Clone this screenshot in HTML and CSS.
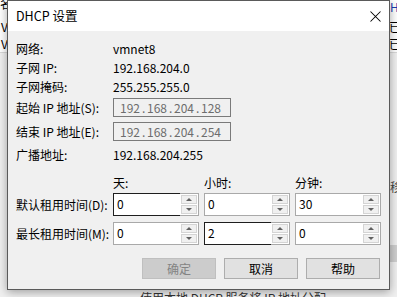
FILE: index.html
```html
<!DOCTYPE html>
<html lang="zh-CN">
<head>
<meta charset="utf-8">
<link rel="stylesheet" href="styles.css">
</head>
<body>
<div class="desktop">
  <div class="under">
    <div class="under-top"></div>
    <span class="ut ut-a">名</span>
    <span class="ut ut-b">V</span>
    <span class="ut ut-c">V</span>
    <span class="ut ut-d">H</span>
    <span class="ut ut-e">已</span>
    <span class="ut ut-f">已</span>
    <span class="ut ut-g">移</span>
    <span class="under-btn"></span>
    <span class="ut ut-h">使用本地 DHCP 服务将 IP 地址分配</span>
  </div>

  <div class="dialog">
    <div class="titlebar">
      <span class="title">DHCP 设置</span>
      <svg class="close" width="11" height="11" viewBox="0 0 11 11"><path d="M0.5 0.5 L10.5 10.5 M10.5 0.5 L0.5 10.5" stroke="#000" stroke-width="1.05" fill="none"/></svg>
    </div>
    <div class="body">
      <div class="row"><span class="lbl">网络:</span><span>vmnet8</span></div>
      <div class="row"><span class="lbl">子网 IP:</span><span>192.168.204.0</span></div>
      <div class="row"><span class="lbl">子网掩码:</span><span>255.255.255.0</span></div>
      <div class="row r-d"><span class="lbl">起始 IP 地址(S):</span>
        <span class="ipbox"><span class="oct">192</span><span class="dot">.</span><span class="oct">168</span><span class="dot">.</span><span class="oct">204</span><span class="dot">.</span><span class="oct">128</span></span>
      </div>
      <div class="row r-e"><span class="lbl">结束 IP 地址(E):</span>
        <span class="ipbox"><span class="oct">192</span><span class="dot">.</span><span class="oct">168</span><span class="dot">.</span><span class="oct">204</span><span class="dot">.</span><span class="oct">254</span></span>
      </div>
      <div class="row r-f"><span class="lbl">广播地址:</span><span>192.168.204.255</span></div>
      <div class="grid r-g">
        <span></span><span>天:</span><span>小时:</span><span>分钟:</span>
      </div>
      <div class="grid r-h">
        <span class="lbl">默认租用时间(D):</span>
        <div class="spinner focus"><span class="field">0</span><span class="spin"><i class="up"></i><i class="down"></i></span></div>
        <div class="spinner"><span class="field">0</span><span class="spin"><i class="up"></i><i class="down"></i></span></div>
        <div class="spinner"><span class="field">30</span><span class="spin"><i class="up"></i><i class="down"></i></span></div>
      </div>
      <div class="grid r-i">
        <span class="lbl">最长租用时间(M):</span>
        <div class="spinner"><span class="field">0</span><span class="spin"><i class="up"></i><i class="down"></i></span></div>
        <div class="spinner focus"><span class="field">2</span><span class="spin"><i class="up"></i><i class="down"></i></span></div>
        <div class="spinner"><span class="field">0</span><span class="spin"><i class="up"></i><i class="down"></i></span></div>
      </div>
      <div class="buttons">
        <span class="btn disabled">确定</span>
        <span class="btn">取消</span>
        <span class="btn">帮助</span>
      </div>
    </div>
  </div>
</div>
</body>
</html>
```
FILE: styles.css
```css
html, body {
  margin: 0;
  padding: 0;
}
body {
  font-family: "Noto Sans CJK SC", "Noto Sans", sans-serif;
  font-size: 12px;
  color: #000;
}
.desktop {
  position: relative;
  width: 397px;
  height: 297px;
  overflow: hidden;
  background: #f0f0f0;
}
.under-top {
  position: absolute;
  left: 0;
  top: 0;
  width: 397px;
  height: 52px;
  background: #fff;
  border-bottom: 1px solid #d8d8d8;
}
.ut {
  position: absolute;
  white-space: nowrap;
  line-height: 14px;
}
.ut-a { left: 0px; top: -3px; }
.ut-b { left: 1px; top: 20px; }
.ut-c { left: 1px; top: 37px; }
.ut-d { left: 390px; top: 0px; color: #1a3cb4; }
.ut-e { left: 389px; top: 20px; }
.ut-f { left: 389px; top: 37px; }
.ut-g { left: 390px; top: 180px; color: #444; }
.ut-h { left: 140px; top: 291px; color: #333; }
.under-btn {
  position: absolute;
  left: 390px;
  top: 245px;
  width: 12px;
  height: 17px;
  background: #cfcfcf;
}

.dialog {
  position: absolute;
  left: 7px;
  top: 0;
  width: 383px;
  height: 290px;
  box-sizing: border-box;
  border: 1px solid #5a5a5a;
  background: #f0f0f0;
  box-shadow: 0 2px 9px rgba(0, 0, 0, 0.35);
  display: flex;
  flex-direction: column;
}
.titlebar {
  height: 30px;
  flex: none;
  background: #fff;
  display: flex;
  align-items: center;
  padding-left: 8px;
}
.title {
  font-size: 12.5px;
  line-height: 16px;
}
.close {
  margin-left: auto;
  margin-right: 8px;
}
.body {
  padding: 8px 9px 0 8px;
  display: flex;
  flex-direction: column;
}
.row {
  display: flex;
  align-items: center;
  height: 19px;
  line-height: 19px;
}
.lbl {
  width: 97px;
  flex: none;
  white-space: nowrap;
}
.r-d { margin-top: 2px; }
.r-e { margin-top: 5px; }
.r-f { margin-top: 4px; }
.ipbox {
  box-sizing: border-box;
  width: 118px;
  height: 19px;
  border: 1px solid #7a7a7a;
  background: #f0f0f0;
  color: #6d6d6d;
  display: flex;
  align-items: center;
  padding-left: 6px;
  line-height: 16px;
}
.oct {
  width: 22px;
  flex: none;
}
.dot {
  width: 5px;
  flex: none;
}

.grid {
  display: grid;
  grid-template-columns: 92px 86px 86px 86px;
  column-gap: 5px;
  align-items: center;
}
.grid .lbl { width: auto; }
.r-g {
  margin-top: 9px;
  height: 19px;
  line-height: 19px;
}
.r-h { margin-top: 1px; height: 23px; }
.r-i { margin-top: 6px; height: 23px; }
.spinner {
  display: flex;
  height: 23px;
  box-sizing: border-box;
}
.field {
  flex: 1;
  box-sizing: border-box;
  height: 23px;
  border: 1px solid #a9a9a9;
  border-right: none;
  background: #fff;
  padding-left: 3px;
  line-height: 19px;
}
.spinner.focus .field {
  border-color: #1e1e1e;
}
.spin {
  width: 19px;
  flex: none;
  box-sizing: border-box;
  height: 23px;
  border: 1px solid #a9a9a9;
  border-left: none;
  background: #fff;
  display: flex;
  flex-direction: column;
  padding: 1px;
  gap: 1px;
}
.spin i {
  flex: 1;
  box-sizing: border-box;
  border: 1px solid #d4d4d4;
  background: #f0f0f0;
  display: flex;
  align-items: center;
  justify-content: center;
}
.spin i::before {
  content: "";
  width: 0;
  height: 0;
  border-left: 3px solid transparent;
  border-right: 3px solid transparent;
}
.spin i.up::before {
  border-bottom: 3px solid #606060;
}
.spin i.down::before {
  border-top: 3px solid #606060;
}

.buttons {
  margin-top: 13px;
  display: flex;
  justify-content: flex-end;
  gap: 8px;
}
.btn {
  box-sizing: border-box;
  width: 74px;
  height: 21px;
  border: 1px solid #adadad;
  background: #e1e1e1;
  display: flex;
  align-items: center;
  justify-content: center;
  line-height: 16px;
}
.btn.disabled {
  background: #cccccc;
  border-color: #bfbfbf;
  color: #838383;
}
```
